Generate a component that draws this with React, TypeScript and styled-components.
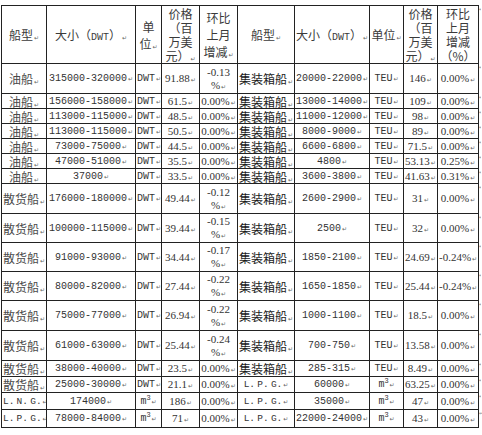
import React from "react";
import styled, { createGlobalStyle } from "styled-components";

const GlobalStyle = createGlobalStyle`
  body {
    margin: 0;
    background: #fff;
    color: #2e2e2e;
    font-family: "Noto Sans CJK SC", sans-serif;
  }
`;

const Page = styled.div`
  padding: 5px 0 0 1px;
`;

const Table = styled.table`
  border-collapse: collapse;
  table-layout: fixed;
  width: 480px;
`;

const Col = styled.col<{ $w: number }>`
  width: ${(p) => p.$w}px;
`;

const Row = styled.tr<{ $h: number }>`
  height: ${(p) => p.$h}px;
`;

const Cell = styled.td`
  border: 1px solid #222;
  padding: 0 1px;
  text-align: center;
  vertical-align: middle;
  line-height: 13px;
  white-space: nowrap;
  overflow: hidden;
`;

const HeadCell = styled(Cell)<{ $loose?: boolean }>`
  font-size: 12px;
  line-height: ${(p) => (p.$loose ? 17 : 14)}px;
  color: #3a3a3a;
`;

const ShipCell = styled(Cell)<{ $dark?: boolean }>`
  font-size: 12px;
  color: ${(p) => (p.$dark ? "#1a1a1a" : "#4a4a4a")};
`;

const MonoCell = styled(Cell)`
  font-family: "Liberation Mono", "Noto Sans CJK SC", monospace;
  font-size: 10px;
  color: #333;
`;

const GasCell = styled(MonoCell)`
  font-size: 9.5px;
  word-spacing: -3.5px;
`;

const NumCell = styled(Cell)`
  font-family: "Liberation Serif", serif;
  font-size: 11px;
  color: #333;
`;

const EndCell = styled.td`
  border: none;
  padding: 0;
  vertical-align: top;
  font-size: 5px;
  line-height: 7px;
  color: #888;
  font-family: "DejaVu Sans", sans-serif;
  overflow: hidden;
`;

const Latin = styled.span`
  font-family: "Liberation Mono", monospace;
  font-size: 10px;
  line-height: 0;
`;

const Mark = styled.span`
  font-family: "DejaVu Sans", sans-serif;
  font-size: 6px;
  line-height: 0;
  word-spacing: 0;
  color: #666;
  margin-left: 1px;
`;

const Sup = styled.sup`
  font-size: 7px;
  line-height: 0;
`;

const M = () => <Mark>↵</Mark>;

type Side = {
  ship: string;
  size: string;
  unit: string;
  price: string;
  change: string;
};

type Line = { h: number; left: Side; right: Side };

const oil = (size: string, price: string, change = "0.00%"): Side => ({ ship: "油船", size, unit: "DWT", price, change });
const bulk = (size: string, price: string, change = "0.00%"): Side => ({ ship: "散货船", size, unit: "DWT", price, change });
const box = (size: string, price: string, change = "0.00%"): Side => ({ ship: "集装箱船", size, unit: "TEU", price, change });
const gas = (ship: string, size: string, price: string): Side => ({ ship, size, unit: "m3", price, change: "0.00%" });

const rows: Line[] = [
  { h: 30, left: oil("315000-320000", "91.88", "-0.13|%"), right: box("20000-22000", "146") },
  { h: 15, left: oil("156000-158000", "61.5"), right: box("13000-14000", "109") },
  { h: 15, left: oil("113000-115000", "48.5"), right: box("11000-12000", "98") },
  { h: 15, left: oil("113000-115000", "50.5"), right: box("8000-9000", "89") },
  { h: 15, left: oil("73000-75000", "44.5"), right: box("6600-6800", "71.5") },
  { h: 15, left: oil("47000-51000", "35.5"), right: box("4800", "53.13", "0.25%") },
  { h: 15, left: oil("37000", "33.5"), right: box("3600-3800", "41.63", "0.31%") },
  { h: 30, left: bulk("176000-180000", "49.44", "-0.12|%"), right: box("2600-2900", "31") },
  { h: 29, left: bulk("100000-115000", "39.44", "-0.15|%"), right: box("2500", "32") },
  { h: 29, left: bulk("91000-93000", "34.44", "-0.17|%"), right: box("1850-2100", "24.69", "-0.24%") },
  { h: 29, left: bulk("80000-82000", "27.44", "-0.22|%"), right: box("1650-1850", "25.44", "-0.24%") },
  { h: 30, left: bulk("75000-77000", "26.94", "-0.22|%"), right: box("1000-1100", "18.5") },
  { h: 30, left: bulk("61000-63000", "25.44", "-0.24|%"), right: box("700-750", "13.58") },
  { h: 16, left: bulk("38000-40000", "23.5"), right: box("285-315", "8.49") },
  { h: 16, left: bulk("25000-30000", "21.1"), right: gas("L. P. G.", "60000", "63.25") },
  { h: 17, left: gas("L. N. G.", "174000", "186"), right: gas("L. P. G.", "35000", "47") },
  { h: 18, left: gas("L. P. G.", "78000-84000", "71"), right: gas("L. P. G.", "22000-24000", "43") },
];

const widths = [45, 89, 26, 38, 38, 57, 75, 34, 34, 41, 3];

const isLatin = (s: string) => /^[A-Z. ]+$/.test(s);

const Unit = ({ value }: { value: string }) =>
  value === "m3" ? (
    <>
      m<Sup>3</Sup>
      <M />
    </>
  ) : (
    <>
      {value}
      <M />
    </>
  );

const Change = ({ value }: { value: string }) => {
  const [a, b] = value.split("|");
  return b ? (
    <>
      {a}
      <br />
      {b}
      <M />
    </>
  ) : (
    <>
      {a}
      <M />
    </>
  );
};

const SideCells = ({ d, dark }: { d: Side; dark?: boolean }) => (
  <>
    {isLatin(d.ship) ? (
      <GasCell>
        {d.ship}
        <M />
      </GasCell>
    ) : (
      <ShipCell $dark={dark}>
        {d.ship}
        <M />
      </ShipCell>
    )}
    <MonoCell>
      {d.size}
      <M />
    </MonoCell>
    <MonoCell>
      <Unit value={d.unit} />
    </MonoCell>
    <NumCell>
      {d.price}
      <M />
    </NumCell>
    <NumCell>
      <Change value={d.change} />
    </NumCell>
  </>
);

export default function App() {
  return (
    <Page>
      <GlobalStyle />
      <Table>
        <colgroup>
          {widths.map((w, i) => (
            <Col key={i} $w={w} />
          ))}
        </colgroup>
        <tbody>
          <Row $h={58}>
            <HeadCell>
              船型<M />
            </HeadCell>
            <HeadCell>
              大小（<Latin>DWT</Latin>）<M />
            </HeadCell>
            <HeadCell $loose>
              单<br />位<M />
            </HeadCell>
            <HeadCell>
              价格<br />（百<br />万美<br />元）<M />
            </HeadCell>
            <HeadCell $loose>
              环比<br />上月<br />增减<M />
            </HeadCell>
            <HeadCell>
              船型<M />
            </HeadCell>
            <HeadCell>
              大小（<Latin>DWT</Latin>）<M />
            </HeadCell>
            <HeadCell>
              单位<M />
            </HeadCell>
            <HeadCell>
              价格<br />（百<br />万美<br />元）<M />
            </HeadCell>
            <HeadCell>
              环比<br />上月<br />增减<br />（%）
            </HeadCell>
            <EndCell>↵</EndCell>
          </Row>
          {rows.map((r, i) => (
            <Row key={i} $h={r.h}>
              <SideCells d={r.left} />
              <SideCells d={r.right} dark />
              <EndCell>↵</EndCell>
            </Row>
          ))}
        </tbody>
      </Table>
    </Page>
  );
}
